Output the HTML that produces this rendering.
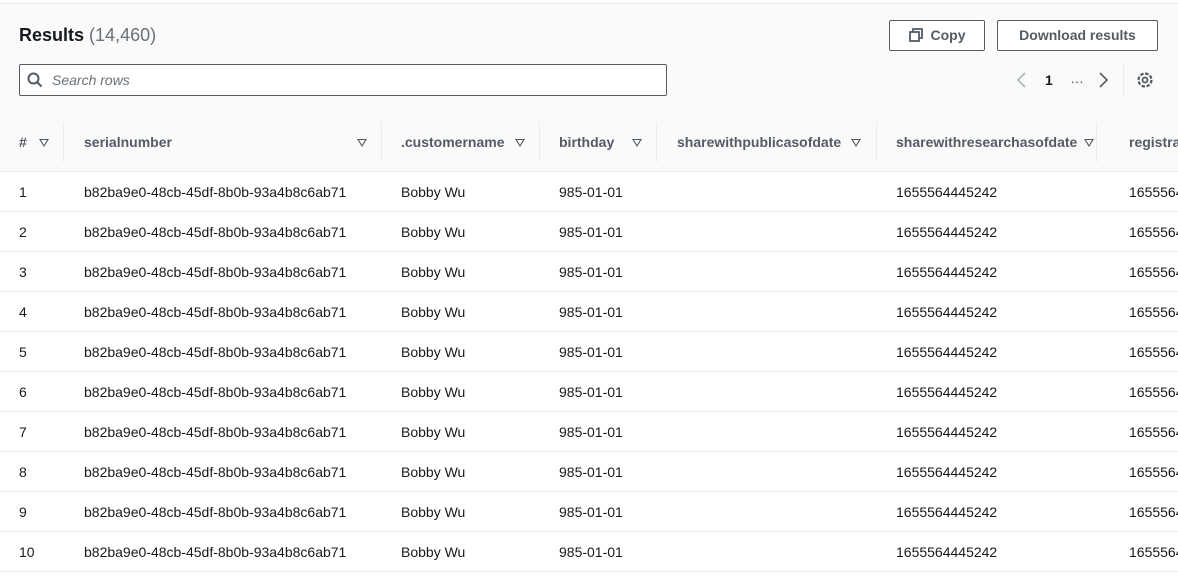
<!DOCTYPE html><html><head><style>
body{margin:0;width:1178px;height:578px;overflow:hidden;background:#fff;font-family:"Liberation Sans",sans-serif;color:#16191f;font-size:14px;position:relative}
.top{position:absolute;left:0;width:1178px;background:#fafafa;border-top:1px solid #eaeded;border-bottom:1px solid #eaeded;top:3px;height:109px}
.abs{position:absolute}
.btn{position:absolute;top:20px;height:31px;border:1px solid #545b64;border-radius:2px;background:#fff;font-weight:bold;color:#545b64;font-size:14px;line-height:29px;text-align:center;box-sizing:border-box}
.thead{position:absolute;left:0;top:113px;width:1178px;height:58px;background:#fafafa;border-bottom:1px solid #eaeded}
.th{position:absolute;top:134px;font-weight:bold;color:#545b64;font-size:14px}
.sep{position:absolute;top:122px;width:1px;height:40px;background:#eaeded}
.tri{position:absolute;top:139px;width:0;height:0;border-left:5px solid transparent;border-right:5px solid transparent;border-top:8px solid #545b64}
.tri:after{content:"";position:absolute;left:-3px;top:-7px;border-left:3px solid transparent;border-right:3px solid transparent;border-top:5px solid #fafafa}
.row{position:absolute;left:0;width:1178px;height:39px;border-bottom:1px solid #eaeded}
.row span{position:absolute;top:12px}
</style></head><body>
<div class="top"></div>
<div class="abs" style="left:19px;top:25px;font-size:18px"><b>Results</b> <span style="color:#687078">(14,460)</span></div>
<div class="abs" style="left:19px;top:64px;width:646px;height:30px;border:1px solid #545b64;border-radius:2px;background:#fff"></div>
<svg class="abs" style="left:27px;top:72px" width="16" height="16" viewBox="0 0 16 16"><circle cx="6.5" cy="6.5" r="5" fill="none" stroke="#545b64" stroke-width="2"/><line x1="10" y1="10" x2="14.5" y2="14.5" stroke="#545b64" stroke-width="2"/></svg>
<div class="abs" style="left:52px;top:72px;font-style:italic;color:#687078">Search rows</div>
<div class="btn" style="left:889px;width:96px"><svg style="vertical-align:-2px;margin-right:8px" width="14" height="14" viewBox="0 0 14 14"><rect x="1" y="4" width="9" height="9" fill="none" stroke="#545b64" stroke-width="1.8"/><path d="M4 4V1h9v9h-3" fill="none" stroke="#545b64" stroke-width="1.8"/></svg>Copy</div>
<div class="btn" style="left:997px;width:161px">Download results</div>
<svg class="abs" style="left:1015px;top:72px" width="12" height="16"><path d="M10 1L3 8l7 7" fill="none" stroke="#aab7b8" stroke-width="1.6"/></svg>
<div class="abs" style="left:1045px;top:72px;font-weight:bold">1</div>
<div class="abs" style="left:1070px;top:70px;color:#545b64">…</div>
<svg class="abs" style="left:1098px;top:72px" width="12" height="16"><path d="M2 1l7 7-7 7" fill="none" stroke="#545b64" stroke-width="1.6"/></svg>
<div class="abs" style="left:1123px;top:65px;width:1px;height:32px;background:#eaeded"></div>
<svg class="abs" style="left:1135px;top:70px" width="20" height="20" viewBox="0 0 20 20"><circle cx="10" cy="10" r="6.5" fill="none" stroke="#545b64" stroke-width="2.2" stroke-dasharray="3.5 1.6"/><circle cx="10" cy="10" r="2.5" fill="none" stroke="#545b64" stroke-width="1.8"/></svg>
<div class="thead"></div>
<div class="th" style="left:19px">#</div><div class="tri" style="left:39px"></div><div class="sep" style="left:63px"></div>
<div class="th" style="left:84px">serialnumber</div><div class="tri" style="left:357px"></div><div class="sep" style="left:381px"></div>
<div class="th" style="left:401px">.customername</div><div class="tri" style="left:515px"></div><div class="sep" style="left:539px"></div>
<div class="th" style="left:559px">birthday</div><div class="tri" style="left:632px"></div><div class="sep" style="left:656px"></div>
<div class="th" style="left:677px">sharewithpublicasofdate</div><div class="tri" style="left:851px"></div><div class="sep" style="left:876px"></div>
<div class="th" style="left:896px">sharewithresearchasofdate</div><div class="tri" style="left:1084px"></div><div class="sep" style="left:1096px"></div>
<div class="th" style="left:1129px">registrationdate</div>
<div class="row" style="top:172px"><span style="left:19px">1</span><span style="left:84px">b82ba9e0-48cb-45df-8b0b-93a4b8c6ab71</span><span style="left:401px">Bobby Wu</span><span style="left:559px">985-01-01</span><span style="left:896px">1655564445242</span><span style="left:1129px">1655564445242</span></div>
<div class="row" style="top:212px"><span style="left:19px">2</span><span style="left:84px">b82ba9e0-48cb-45df-8b0b-93a4b8c6ab71</span><span style="left:401px">Bobby Wu</span><span style="left:559px">985-01-01</span><span style="left:896px">1655564445242</span><span style="left:1129px">1655564445242</span></div>
<div class="row" style="top:252px"><span style="left:19px">3</span><span style="left:84px">b82ba9e0-48cb-45df-8b0b-93a4b8c6ab71</span><span style="left:401px">Bobby Wu</span><span style="left:559px">985-01-01</span><span style="left:896px">1655564445242</span><span style="left:1129px">1655564445242</span></div>
<div class="row" style="top:292px"><span style="left:19px">4</span><span style="left:84px">b82ba9e0-48cb-45df-8b0b-93a4b8c6ab71</span><span style="left:401px">Bobby Wu</span><span style="left:559px">985-01-01</span><span style="left:896px">1655564445242</span><span style="left:1129px">1655564445242</span></div>
<div class="row" style="top:332px"><span style="left:19px">5</span><span style="left:84px">b82ba9e0-48cb-45df-8b0b-93a4b8c6ab71</span><span style="left:401px">Bobby Wu</span><span style="left:559px">985-01-01</span><span style="left:896px">1655564445242</span><span style="left:1129px">1655564445242</span></div>
<div class="row" style="top:372px"><span style="left:19px">6</span><span style="left:84px">b82ba9e0-48cb-45df-8b0b-93a4b8c6ab71</span><span style="left:401px">Bobby Wu</span><span style="left:559px">985-01-01</span><span style="left:896px">1655564445242</span><span style="left:1129px">1655564445242</span></div>
<div class="row" style="top:412px"><span style="left:19px">7</span><span style="left:84px">b82ba9e0-48cb-45df-8b0b-93a4b8c6ab71</span><span style="left:401px">Bobby Wu</span><span style="left:559px">985-01-01</span><span style="left:896px">1655564445242</span><span style="left:1129px">1655564445242</span></div>
<div class="row" style="top:452px"><span style="left:19px">8</span><span style="left:84px">b82ba9e0-48cb-45df-8b0b-93a4b8c6ab71</span><span style="left:401px">Bobby Wu</span><span style="left:559px">985-01-01</span><span style="left:896px">1655564445242</span><span style="left:1129px">1655564445242</span></div>
<div class="row" style="top:492px"><span style="left:19px">9</span><span style="left:84px">b82ba9e0-48cb-45df-8b0b-93a4b8c6ab71</span><span style="left:401px">Bobby Wu</span><span style="left:559px">985-01-01</span><span style="left:896px">1655564445242</span><span style="left:1129px">1655564445242</span></div>
<div class="row" style="top:532px"><span style="left:19px">10</span><span style="left:84px">b82ba9e0-48cb-45df-8b0b-93a4b8c6ab71</span><span style="left:401px">Bobby Wu</span><span style="left:559px">985-01-01</span><span style="left:896px">1655564445242</span><span style="left:1129px">1655564445242</span></div>
</body></html>
